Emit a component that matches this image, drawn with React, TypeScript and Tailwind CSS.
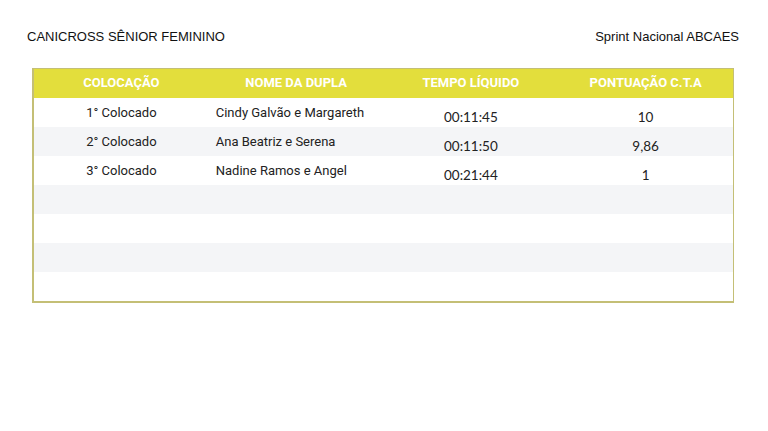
import React from "react";

const rows = [
  { pos: "1° Colocado", name: "Cindy Galvão e Margareth", time: "00:11:45", pts: "10" },
  { pos: "2° Colocado", name: "Ana Beatriz e Serena", time: "00:11:50", pts: "9,86" },
  { pos: "3° Colocado", name: "Nadine Ramos e Angel", time: "00:21:44", pts: "1" },
  { pos: "", name: "", time: "", pts: "" },
  { pos: "", name: "", time: "", pts: "" },
  { pos: "", name: "", time: "", pts: "" },
  { pos: "", name: "", time: "", pts: "" },
];

export default function App() {
  return (
    <div className="w-[768px] h-[431px] bg-white font-['Roboto',sans-serif] text-[#222]">
      {/* Cabeçalho da página */}
      <div className="flex justify-between items-center pl-[27px] pr-[29px] pt-[27px] font-['Liberation_Sans',Arial,sans-serif] text-[13px] text-[#111]">
        <span>CANICROSS SÊNIOR FEMININO</span>
        <span>Sprint Nacional ABCAES</span>
      </div>

      {/* Tabela de resultados */}
      <div className="ml-[32px] mt-[21px] w-[702px] border-2 border-t border-r border-[#c4bf76]">
        <div className="grid grid-cols-4 h-[29px] bg-[#e3de3c] items-center text-white font-bold text-[13px] text-center">
          <span>COLOCAÇÃO</span>
          <span>NOME DA DUPLA</span>
          <span>TEMPO LÍQUIDO</span>
          <span>PONTUAÇÃO C.T.A</span>
        </div>
        {rows.map((r, i) => (
          <div
            key={i}
            className={`grid grid-cols-4 h-[29px] items-center text-[13px] ${i % 2 === 1 ? "bg-[#f4f5f7]" : "bg-white"}`}
          >
            <span className="text-center pt-[2px]">{r.pos}</span>
            <span className="pl-[7px] pt-[2px]">{r.name}</span>
            <span className="text-center pt-[9px] font-['Lato',sans-serif] text-[13.5px]">{r.time}</span>
            <span className="text-center pt-[9px] font-['Lato',sans-serif] text-[13.5px]">{r.pts}</span>
          </div>
        ))}
      </div>
    </div>
  );
}
